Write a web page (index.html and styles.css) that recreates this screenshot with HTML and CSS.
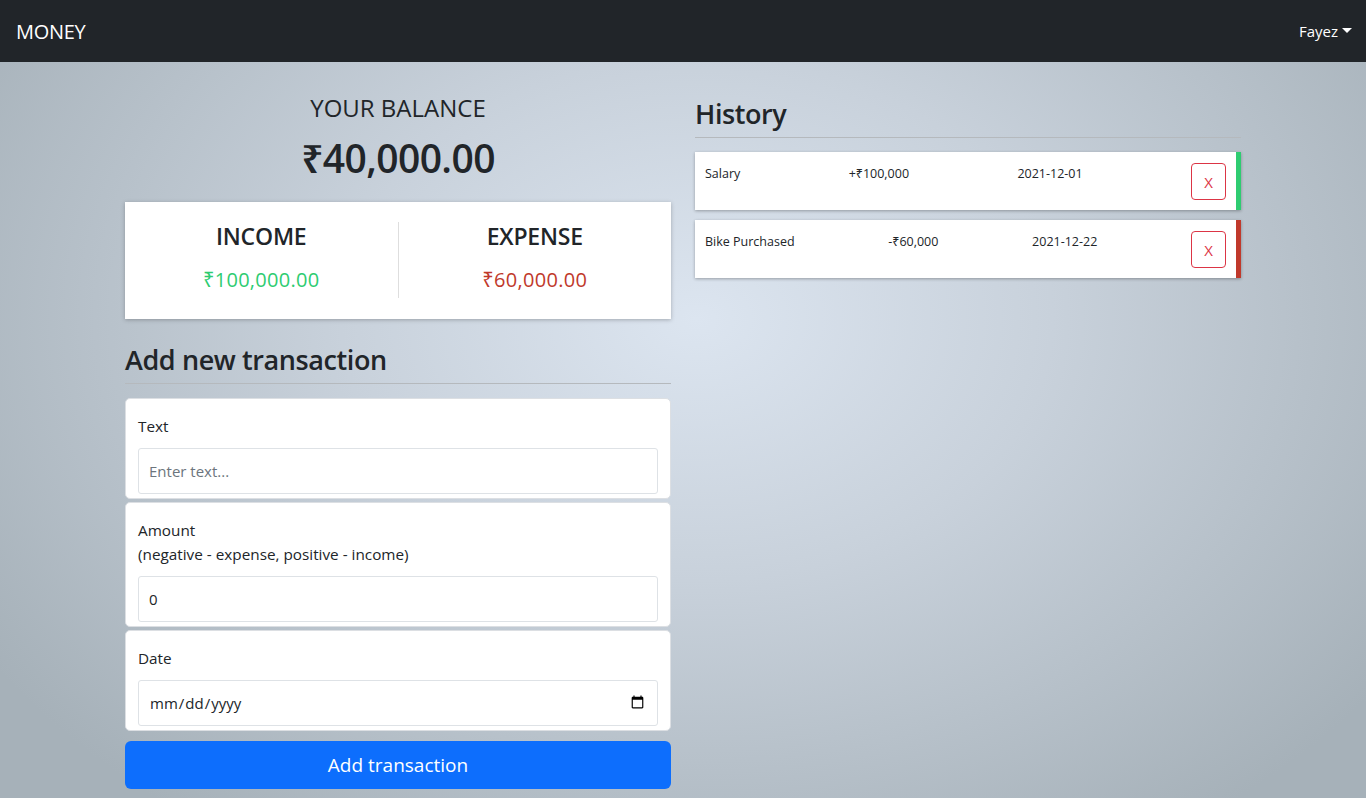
FILE: index.html
```html
<!DOCTYPE html>
<html lang="en">
<head>
<meta charset="utf-8">
<title>Money</title>
<link rel="stylesheet" href="styles.css">
</head>
<body>
<nav class="navbar">
  <span class="brand">MONEY</span>
  <span class="user">Fayez<span class="caret"></span></span>
</nav>
<main class="container">
  <div class="row">
    <section class="col">
      <h4 class="balance-title">YOUR BALANCE</h4>
      <h1 class="balance">₹40,000.00</h1>
      <div class="inc-exp">
        <div class="half">
          <h4 class="ie-title">INCOME</h4>
          <p class="money plus">₹100,000.00</p>
        </div>
        <div class="half">
          <h4 class="ie-title">EXPENSE</h4>
          <p class="money minus">₹60,000.00</p>
        </div>
      </div>
      <h3 class="section-title add-title">Add new transaction</h3>
      <form class="tx-form">
        <div class="form-card">
          <label class="form-label">Text</label>
          <input class="form-control" type="text" placeholder="Enter text...">
        </div>
        <div class="form-card">
          <label class="form-label">Amount <br>(negative - expense, positive - income)</label>
          <input class="form-control" type="number" value="0">
        </div>
        <div class="form-card">
          <label class="form-label">Date</label>
          <input class="form-control" type="date">
        </div>
        <button class="btn-add" type="button">Add transaction</button>
      </form>
    </section>
    <section class="col">
      <h3 class="section-title history-title">History</h3>
      <ul class="list">
        <li class="item plus-item">
          <span>Salary</span>
          <span>+₹100,000</span>
          <span>2021-12-01</span>
          <button class="del" type="button">X</button>
        </li>
        <li class="item minus-item">
          <span>Bike Purchased</span>
          <span>-₹60,000</span>
          <span>2021-12-22</span>
          <button class="del" type="button">X</button>
        </li>
      </ul>
    </section>
  </div>
</main>
</body>
</html>
```
FILE: styles.css
```css
* { box-sizing: border-box; }
html, body { margin: 0; }
body {
  font-family: "Open Sans", "Noto Sans", sans-serif;
  color: #212529;
  min-height: 798px;
  background: radial-gradient(ellipse 62% 78% at 51% 40%, #dce5f0 0%, #c8d1db 42%, #a6b1b9 100%);
  background-attachment: fixed;
}
.navbar {
  height: 62px;
  background: #212529;
  display: flex;
  align-items: center;
  justify-content: space-between;
  padding: 0 14px 0 16px;
  color: #fff;
}
.brand { font-size: 20px; letter-spacing: -0.3px; }
.user { font-size: 15px; display: flex; align-items: center; padding-left: 2px; }
.caret {
  display: inline-block;
  margin-left: 4px;
  border-top: 5px solid #fff;
  border-left: 5px solid transparent;
  border-right: 5px solid transparent;
  margin-top: -2px;
}
.container { width: 1140px; margin: 0 auto; padding: 0 12px; }
.row { display: flex; margin: 0 -12px; }
.col { width: 50%; padding: 0 12px; }
.balance-title {
  margin: 32px 0 0;
  text-align: center;
  font-size: 24px;
  font-weight: 400;
  line-height: 1.2;
}
.balance {
  margin: 12px 0 20px;
  text-align: center;
  font-size: 39px;
  font-weight: 600;
  letter-spacing: -0.6px;
  line-height: 1.2;
}
.inc-exp {
  background: #fff;
  box-shadow: 0 1px 4px rgba(0,0,0,0.25);
  padding: 20px 0 21px;
  display: flex;
}
.half { flex: 1; text-align: center; padding: 0 0 3px; }
.half:first-child { border-right: 1px solid #dedede; }
.ie-title { margin: 0 0 14px; font-size: 23px; font-weight: 600; line-height: 29px; letter-spacing: -0.2px; }
.money { margin: 0; font-size: 20px; line-height: 30px; letter-spacing: 0.3px; }
.plus { color: #2ecc71; }
.minus { color: #c0392b; }
.section-title {
  font-size: 27px;
  font-weight: 600;
  line-height: 1.2;
  letter-spacing: -0.4px;
  margin: 0;
  padding-bottom: 7px;
  border-bottom: 1px solid #b5b9bd;
}
.add-title { margin-top: 25px; margin-bottom: 14px; }
.history-title { margin-top: 36px; margin-bottom: 14px; }
.tx-form { display: flex; flex-direction: column; gap: 3px; }
.form-card {
  background: #fff;
  border: 1px solid #dcdfe3;
  border-radius: 5px;
  padding: 15px 12px 4px;
  display: flex;
  flex-direction: column;
}
.form-label { font-size: 15.3px; line-height: 24px; margin-bottom: 10px; }
.form-control {
  height: 46px;
  border: 1px solid #dee2e6;
  border-radius: 3px;
  padding: 0 10px;
  font-family: inherit;
  font-size: 15px;
  color: #212529;
  background: #fff;
}
.form-control::placeholder { color: #6c757d; }
.btn-add {
  margin-top: 7px;
  height: 48px;
  border: none;
  border-radius: 6px;
  background: #0d6efd;
  color: #fff;
  font-family: inherit;
  font-size: 19px;
}
.list { list-style: none; margin: 0; padding: 0; display: flex; flex-direction: column; gap: 10px; }
.item {
  background: #fff;
  box-shadow: 0 1px 3px rgba(0,0,0,0.3);
  display: flex;
  justify-content: space-between;
  align-items: flex-start;
  padding: 10px;
  font-size: 12.5px;
  line-height: 23px;
  height: 58px;
}
.plus-item { border-right: 5px solid #2ecc71; }
.minus-item { border-right: 5px solid #c0392b; }
.del {
  width: 35px;
  height: 37px;
  margin-top: 1px;
  border: 1px solid #dc3545;
  border-radius: 4px;
  background: #fff;
  color: #dc3545;
  font-family: inherit;
  font-size: 15px;
  padding: 0;
}
```
